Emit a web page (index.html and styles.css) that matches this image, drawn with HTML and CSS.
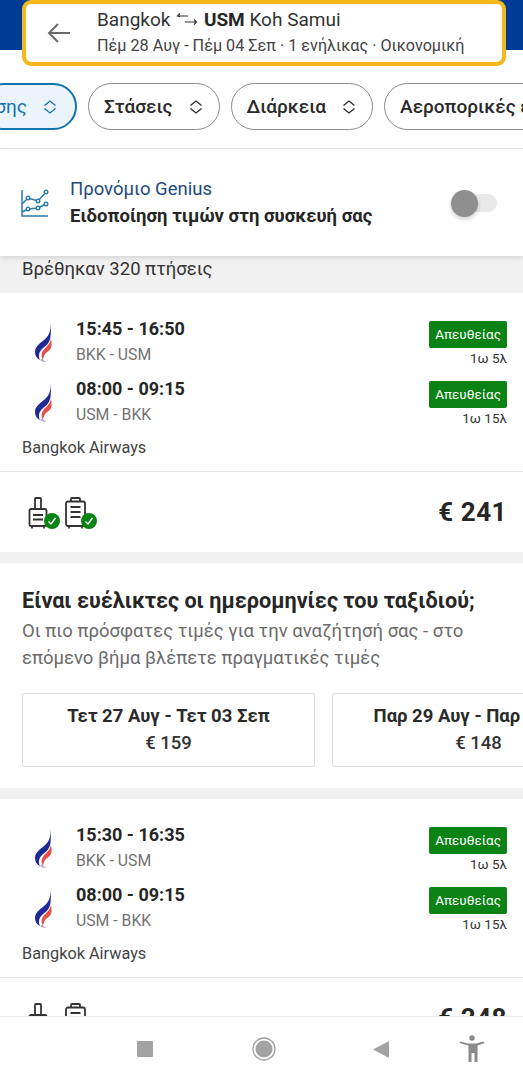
FILE: index.html
```html
<!DOCTYPE html>
<html lang="el">
<head>
<meta charset="utf-8">
<title>Πτήσεις</title>
<link rel="stylesheet" href="styles.css">
</head>
<body>
<svg class="defs" width="0" height="0">
  <defs>
    <symbol id="logo" viewBox="0 0 20 40">
      <path fill="#1f2a96" d="M16.500 0C17 8 15 13 10 17 5 21 1 24 1 29c0 4 2 6.500 5 8-2-4-1-8 2-11 3-3 7-4 8.500-12C17 9 17 4 16.500 0z"/>
      <path fill="#e5504a" d="M17 16c-1 5-5 8-7.500 11-2.500 3-2.500 7-.5 10 .5-3 1-5 3-7 2-2 5-3 5.500-7 .2-2.500 0-5-.5-7z"/>
      <path fill="#b7a3cb" d="M6 37c1.500 1.500 4 2 6.500 2-1.300-.5-2.700-1.300-3.500-2.500l-.5-1z"/>
    </symbol>
    <symbol id="sort" viewBox="0 0 14 14">
      <path fill="none" stroke="currentColor" stroke-width="1.300" d="M1.500 5.500 7 1l5.500 4.500M1.500 8.500 7 13l5.500-4.500"/>
    </symbol>
    <symbol id="cabin" viewBox="0 0 24 32">
      <path fill="none" stroke="#333" stroke-width="1.800" d="M7 12V2a1 1 0 0 1 1-1h4a1 1 0 0 1 1 1v10M3 12h14a1.500 1.500 0 0 1 1.500 1.500v14A1.500 1.500 0 0 1 17 29H3a1.500 1.500 0 0 1-1.500-1.500v-14A1.500 1.500 0 0 1 3 12zM5 18h10M5 22.500h10M4 29v2.500M16 29v2.500"/>
    </symbol>
    <symbol id="bag" viewBox="0 0 24 32">
      <path fill="none" stroke="#333" stroke-width="1.800" d="M6 4.500V2a1 1 0 0 1 1-1h7a1 1 0 0 1 1 1v2.500M3 4.500h15a2 2 0 0 1 2 2V27a2 2 0 0 1-2 2H3a2 2 0 0 1-2-2V6.500a2 2 0 0 1 2-2zM5.500 10h10M5.500 15h10M5.500 20h10M4 29v2.500M17 29v2.500"/>
    </symbol>
    <symbol id="check" viewBox="0 0 16 16">
      <circle cx="8" cy="8" r="8" fill="#0a8214"/>
      <path fill="none" stroke="#fff" stroke-width="1.400" d="m4.500 8.500 2.500 2.500 4.500-6"/>
    </symbol>
  </defs>
</svg>

<main class="page">
  <header class="top">
    <div class="search">
      <svg class="back" viewBox="0 0 24 24" width="24" height="24"><path fill="none" stroke="#6b6b6b" stroke-width="2" d="M23 12H2M11 3l-9 9 9 9"/></svg>
      <div class="search-text">
        <div class="route">Bangkok <svg class="swap" viewBox="0 0 22 12" width="22" height="12"><path fill="none" stroke="#333" stroke-width="1.200" d="M12 3H1.500M4 .5 1.500 3 4 3.800M9 9h11.500M18 6.500 20.500 9 18 11.500"/></svg> <b>USM</b> Koh Samui</div>
        <div class="dates">Πέμ 28 Αυγ - Πέμ 04 Σεπ · 1 ενήλικας · Οικονομική</div>
      </div>
    </div>
  </header>

  <nav class="filters">
    <div class="pill pill-active"><span>σης</span><svg class="sort" width="14" height="14"><use href="#sort"/></svg></div>
    <div class="pill"><span>Στάσεις</span><svg class="sort" width="14" height="14"><use href="#sort"/></svg></div>
    <div class="pill"><span>Διάρκεια</span><svg class="sort" width="14" height="14"><use href="#sort"/></svg></div>
    <div class="pill"><span>Αεροπορικές εταιρείες</span></div>
  </nav>

  <section class="genius">
    <svg class="chart" viewBox="0 0 28 28" width="28" height="28"><path fill="none" stroke="#2a7ab0" stroke-width="1.500" d="M1 1v26h26M1 15l6-6 10 3 8-9M1 23l6-3 10-1 8-4"/><g fill="#fff" stroke="#2a7ab0" stroke-width="1.400"><circle cx="7" cy="9" r="1.800"/><circle cx="17" cy="12" r="1.800"/><circle cx="25" cy="3" r="1.800"/><circle cx="7" cy="20" r="1.800"/><circle cx="17" cy="19" r="1.800"/><circle cx="25" cy="15" r="1.800"/></g></svg>
    <div class="genius-text">
      <div class="genius-title">Προνόμιο Genius</div>
      <div class="genius-sub">Ειδοποίηση τιμών στη συσκευή σας</div>
    </div>
    <div class="switch"><span class="knob"></span></div>
  </section>

  <div class="count">Βρέθηκαν 320 πτήσεις</div>

  <article class="card">
    <div class="legs">
      <div class="leg">
        <svg class="logo" width="20" height="40"><use href="#logo"/></svg>
        <div class="times"><div class="time">15:45 - 16:50</div><div class="airports">BKK - USM</div></div>
        <div class="meta"><span class="direct">Απευθείας</span><span class="dur">1ω 5λ</span></div>
      </div>
      <div class="leg">
        <svg class="logo" width="20" height="40"><use href="#logo"/></svg>
        <div class="times"><div class="time">08:00 - 09:15</div><div class="airports">USM - BKK</div></div>
        <div class="meta"><span class="direct">Απευθείας</span><span class="dur">1ω 15λ</span></div>
      </div>
      <div class="airline">Bangkok Airways</div>
    </div>
    <div class="foot">
      <div class="lug"><svg width="24" height="32"><use href="#cabin"/></svg><svg class="tick" width="16" height="16"><use href="#check"/></svg></div>
      <div class="lug"><svg width="24" height="32"><use href="#bag"/></svg><svg class="tick" width="16" height="16"><use href="#check"/></svg></div>
      <div class="price">€ 241</div>
    </div>
  </article>

  <section class="flex-dates">
    <h2>Είναι ευέλικτες οι ημερομηνίες του ταξιδιού;</h2>
    <p>Οι πιο πρόσφατες τιμές για την αναζήτησή σας - στο επόμενο βήμα βλέπετε πραγματικές τιμές</p>
    <div class="date-row">
      <div class="date-card"><div class="date-range">Τετ 27 Αυγ - Τετ 03 Σεπ</div><div class="date-price">€ 159</div></div>
      <div class="date-card"><div class="date-range">Παρ 29 Αυγ - Παρ 05 Σεπ</div><div class="date-price">€ 148</div></div>
    </div>
  </section>

  <article class="card">
    <div class="legs">
      <div class="leg">
        <svg class="logo" width="20" height="40"><use href="#logo"/></svg>
        <div class="times"><div class="time">15:30 - 16:35</div><div class="airports">BKK - USM</div></div>
        <div class="meta"><span class="direct">Απευθείας</span><span class="dur">1ω 5λ</span></div>
      </div>
      <div class="leg">
        <svg class="logo" width="20" height="40"><use href="#logo"/></svg>
        <div class="times"><div class="time">08:00 - 09:15</div><div class="airports">USM - BKK</div></div>
        <div class="meta"><span class="direct">Απευθείας</span><span class="dur">1ω 15λ</span></div>
      </div>
      <div class="airline">Bangkok Airways</div>
    </div>
    <div class="foot">
      <div class="lug"><svg width="24" height="32"><use href="#cabin"/></svg></div>
      <div class="lug"><svg width="24" height="32"><use href="#bag"/></svg></div>
      <div class="price">€ 248</div>
    </div>
  </article>
</main>

<footer class="sysbar">
  <svg width="18" height="18" viewBox="0 0 18 18"><rect x="1" y="1" width="16" height="16" rx="1" fill="#a3a3a3"/></svg>
  <svg width="24" height="24" viewBox="0 0 24 24"><circle cx="12" cy="12" r="11" fill="none" stroke="#a3a3a3" stroke-width="1.300"/><circle cx="12" cy="12" r="8.500" fill="#a3a3a3"/></svg>
  <svg width="18" height="18" viewBox="0 0 18 18"><path d="M17 1v17L1 9.500z" fill="#a3a3a3"/></svg>
  <svg width="26" height="28" viewBox="0 0 26 28"><circle cx="13" cy="3" r="2.700" fill="#8a8a8a"/><path d="M1 6.500 9 8.500h8l8-2 .5 1.500-7 2.500V27h-3V18h-3v9h-3V10.500L.5 8z" fill="#8a8a8a"/></svg>
</footer>
</body>
</html>
```

FILE: styles.css
```css
* { box-sizing: border-box; }
html, body { margin: 0; padding: 0; }
body {
  width: 523px;
  height: 1080px;
  overflow: hidden;
  display: flex;
  flex-direction: column;
  background: #fff;
  color: #262626;
  font-family: Roboto, "Noto Sans", sans-serif;
}
.defs { position: absolute; }
.page { flex: 1; min-height: 0; overflow: hidden; }

.top {
  height: 66px;
  padding: 0 17px 0 22px;
  background: linear-gradient(#003b95 0 50px, #fff 50px);
}
.search {
  height: 66px;
  display: flex;
  align-items: center;
  background: #fff;
  border: 4px solid #f5b81a;
  border-radius: 9px;
}
.back { margin-left: 21px; flex: none; }
.search-text { margin-left: 26px; margin-top: -2px; }
.route { font-size: 19px; line-height: 24px; color: #333; white-space: nowrap; }
.route b { color: #262626; }
.swap { margin: 0 1px; vertical-align: 1px; }
.dates { font-size: 16.200px; line-height: 20px; margin-top: 4px; color: #444; white-space: nowrap; }

.filters {
  display: flex;
  gap: 11px;
  margin-top: 17px;
  margin-left: -20px;
  height: 47px;
}
.pill {
  flex: none;
  display: flex;
  align-items: center;
  gap: 16px;
  height: 47px;
  padding: 0 16px 0 15px;
  border: 1px solid #8b8b8b;
  border-radius: 24px;
  background: #fff;
  font-size: 19px;
  font-weight: 500;
  color: #2a2a2a;
}
.pill-active {
  width: 97px;
  justify-content: flex-end;
  padding-right: 18px;
  border: 2px solid #1273ae;
  background: #ebf4fa;
  color: #1273ae;
  font-weight: 400;
}
.sort { flex: none; }

.genius {
  margin-top: 18px;
  height: 108px;
  padding: 2px 26px 0 21px;
  border-top: 1px solid #e6e6e6;
  display: flex;
  align-items: center;
  background: #fff;
  box-shadow: 0 2px 5px rgba(0,0,0,.12);
  position: relative;
}
.chart { flex: none; margin-top: -2px; }
.genius-text { margin-left: 21px; flex: 1; }
.genius-title { font-size: 18.500px; line-height: 25px; color: #1c4a7e; }
.genius-sub { font-size: 18.500px; line-height: 28px; font-weight: 700; color: #262626; }
.switch { width: 46px; height: 18px; margin-top: -2px; border-radius: 9px; background: #e9e9e9; position: relative; }
.knob { position: absolute; left: 0; top: -4px; width: 27px; height: 27px; border-radius: 50%; background: #8f8f8f; box-shadow: 0 2px 4px rgba(0,0,0,.2); }

.count {
  height: 37px;
  padding: 1px 0 0 22px;
  background: #f1f1f1;
  font-size: 18.500px;
  line-height: 25px;
  color: #333;
}

.card { background: #fff; }
.legs { height: 179px; padding: 21px 16px 0 22px; border-bottom: 1px solid #e6e6e6; }
.leg { display: flex; height: 60px; align-items: flex-start; }
.logo { flex: none; margin: 9px 0 0 12px; }
.times { margin-left: 22px; flex: 1; }
.time { font-size: 18px; line-height: 28px; font-weight: 700; margin-top: 1px; color: #262626; }
.airports { font-size: 15.800px; line-height: 24px; color: #737373; }
.meta { display: flex; flex-direction: column; align-items: flex-end; padding-top: 7px; }
.direct { height: 27px; padding: 0 6px; background: #0a8214; color: #fff; border-radius: 2px; font-size: 13.500px; line-height: 27px; }
.dur { font-size: 13.500px; line-height: 20px; color: #333; }
.airline { margin-top: 3px; font-size: 16.300px; line-height: 22px; color: #444; }

.foot { height: 80px; display: flex; align-items: center; padding: 0 16px 0 28px; gap: 13px; }
.lug { position: relative; width: 24px; height: 32px; margin-top: 1px; }
.lug > svg:first-child { display: block; }
.tick { position: absolute; left: 16px; top: 16px; }
.price { margin-left: auto; font-size: 26px; font-weight: 700; color: #262626; letter-spacing: .5px; }

.flex-dates {
  height: 247px;
  padding: 25px 0 0 22px;
  border-top: 11px solid #f1f1f1;
  border-bottom: 11px solid #f1f1f1;
}
.flex-dates h2 { margin: 0; font-size: 21.600px; line-height: 26px; font-weight: 700; color: #262626; white-space: nowrap; }
.flex-dates p { margin: 4px 0 0; width: 470px; font-size: 18.500px; line-height: 27px; color: #6b6b6b; }
.date-row { display: flex; gap: 17px; margin-top: 21px; width: 720px; }
.date-card {
  flex: none;
  width: 293px;
  height: 74px;
  border: 1px solid #dedede;
  border-radius: 2px;
  text-align: center;
  padding-top: 9px;
  white-space: nowrap;
  overflow: hidden;
}
.date-range { font-size: 18.500px; line-height: 27px; font-weight: 700; color: #2a2a2a; }
.date-price { font-size: 18.500px; line-height: 26px; font-weight: 500; color: #333; }

.sysbar {
  flex: none;
  height: 64px;
  border-top: 1px solid #eee;
  background: #fff;
  display: grid;
  grid-template-columns: 136px 18px 98px 24px 96px 18px 69px 26px;
  align-items: center;
}
.sysbar svg:nth-child(1) { grid-column: 2; }
.sysbar svg:nth-child(2) { grid-column: 4; }
.sysbar svg:nth-child(3) { grid-column: 6; }
.sysbar svg:nth-child(4) { grid-column: 8; }
```
